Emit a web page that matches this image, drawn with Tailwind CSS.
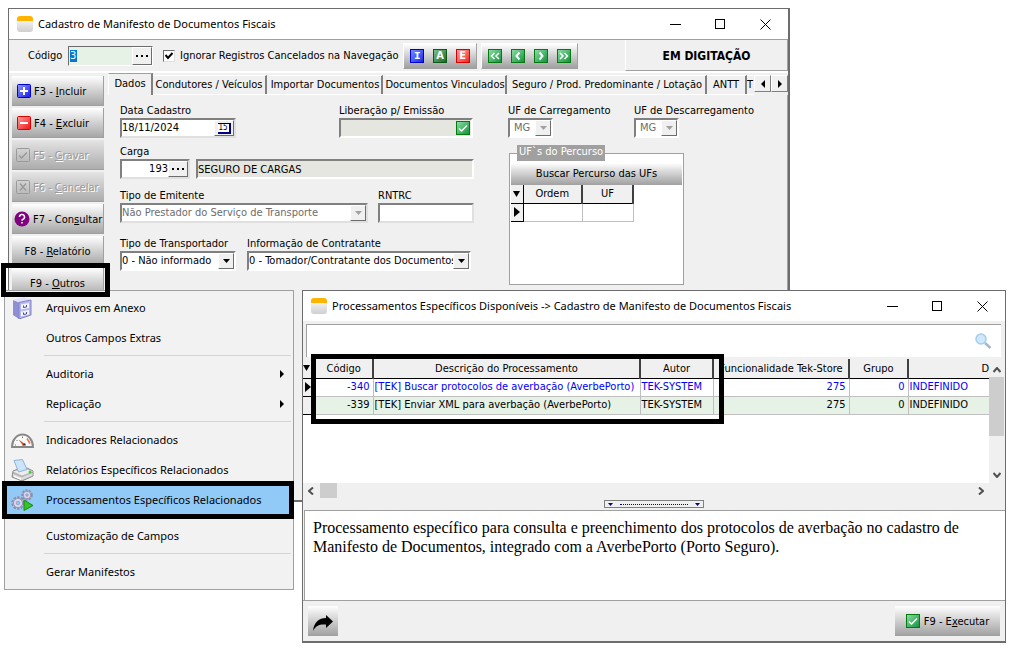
<!DOCTYPE html>
<html lang="pt-BR">
<head>
<meta charset="utf-8">
<title>Cadastro de Manifesto de Documentos Fiscais</title>
<script src="https://cdn.jsdelivr.net/npm/@tailwindcss/browser@4"></script>
</head>
<body class="relative min-h-screen overflow-hidden bg-white font-['DejaVu_Sans_Condensed','DejaVu_Sans',sans-serif] text-[11px] leading-[14px] text-black">

<!-- shared drawings -->
<svg class="absolute size-0" aria-hidden="true">
  <defs>
    <linearGradient id="green" x1="0" y1="0" x2="1" y2="1"><stop offset="0" stop-color="#8fe0a8"/><stop offset="1" stop-color="#0f9038"/></linearGradient>
    <linearGradient id="blue" x1="0" y1="0" x2="1" y2="1"><stop offset="0" stop-color="#8f9cff"/><stop offset="1" stop-color="#1717ee"/></linearGradient>
    <linearGradient id="red" x1="0" y1="0" x2="1" y2="1"><stop offset="0" stop-color="#ffa0a0"/><stop offset="1" stop-color="#f01212"/></linearGradient>
    <linearGradient id="pale" x1="0" y1="0" x2="0" y2="1"><stop offset="0" stop-color="#ffffff"/><stop offset="1" stop-color="#cfcfcf"/></linearGradient>
    <symbol id="app" viewBox="0 0 16 16"><rect width="16" height="16" rx="3" fill="url(#pale)"/><path d="M0 5V3a3 3 0 0 1 3-3h10a3 3 0 0 1 3 3v2z" fill="#ffb400"/></symbol>
    <symbol id="check" viewBox="0 0 14 14"><rect x=".5" y=".5" width="13" height="13" fill="url(#green)" stroke="#067a10"/><path d="M3 7.500 5.500 10 11 4.500" fill="none" stroke="#fff" stroke-width="1.500"/></symbol>
    <symbol id="min" viewBox="0 0 11 11"><path d="M0 5.500h11" stroke="#000"/></symbol>
    <symbol id="max" viewBox="0 0 11 11"><rect x=".5" y=".5" width="9" height="9" fill="none" stroke="#000"/></symbol>
    <symbol id="close" viewBox="0 0 11 11"><path d="m.5.5 10 10m0-10-10 10" stroke="#000" fill="none"/></symbol>
    <symbol id="down" viewBox="0 0 7 4"><path d="M0 0h7L3.500 4z" fill="currentColor"/></symbol>
    <symbol id="right" viewBox="0 0 4 8"><path d="M0 0v8l4-4z" fill="currentColor"/></symbol>
  </defs>
</svg>

<!-- main window -->
<section class="absolute left-2 right-[222px] top-2 flex min-h-[494px] flex-col border border-b-2 border-r-2 border-[#6d6d6d] bg-[#f0f0f0]">
  <header class="flex h-[30px] items-center bg-white pl-2 pr-[17px]">
    <svg class="size-4"><use href="#app"/></svg>
    <h1 class="ml-[5px] flex-1 font-['Noto_Sans',sans-serif] text-[11px]">Cadastro de Manifesto de Documentos Fiscais</h1>
    <div class="flex gap-[34px]">
      <button aria-label="Minimizar"><svg class="size-[11px]"><use href="#min"/></svg></button>
      <button aria-label="Maximizar"><svg class="size-[11px]"><use href="#max"/></svg></button>
      <button aria-label="Fechar"><svg class="size-[11px]"><use href="#close"/></svg></button>
    </div>
  </header>

  <div class="flex h-[34px] items-center border-b-2 border-t border-b-white border-t-[#a0a0a0] pl-[19px]">
    <label for="codigo" class="w-[40px]">Código</label>
    <div class="flex h-5 w-[85px] border border-b-white border-l-[#6d6d6d] border-r-white border-t-[#6d6d6d] bg-[#e6f2e6]">
      <div class="flex min-w-0 flex-1 items-center pl-[1px]"><input id="codigo" value="3" class="h-3 w-[7px] bg-[#0078d7] text-white outline-none"></div>
      <button aria-label="Procurar código" class="flex w-5 items-center justify-center border border-b-[#6d6d6d] border-l-white border-r-[#6d6d6d] border-t-white bg-[#f0f0f0]"><svg class="h-[2px] w-3" viewBox="0 0 12 2"><path d="M0 0h2v2H0zM5 0h2v2H5zM10 0h2v2h-2z"/></svg></button>
    </div>
    <label class="ml-[10px] flex items-center gap-[5px] whitespace-nowrap">
      <input type="checkbox" checked class="peer sr-only">
      <span class="flex size-3 items-center justify-center border border-b-[#e0e0e0] border-l-[#6d6d6d] border-r-[#e0e0e0] border-t-[#6d6d6d] bg-white"><svg class="size-2" viewBox="0 0 8 8"><path d="M.5 3 3 6l4.500-5" fill="none" stroke="#000" stroke-width="2"/></svg></span>
      Ignorar Registros Cancelados na Navegação
    </label>
    <div class="ml-auto flex h-full items-center">
      <div class="flex h-[26px] w-[74px] items-center justify-around border border-b-[#a0a0a0] border-l-white border-r-[#a0a0a0] border-t-white bg-linear-to-b from-white to-[#a0a0a0] px-[2px] text-[11px] font-bold leading-3 text-white">
        <button class="size-[14px] border border-[#0000c8] bg-linear-to-br from-[#7d86ff] to-[#1a1af0] font-['Liberation_Mono',monospace]">I</button>
        <button class="size-[14px] border border-[#0c5a18] bg-linear-to-br from-[#7fc08a] to-[#146a24]">A</button>
        <button class="size-[14px] border border-[#d80000] bg-linear-to-br from-[#ff9a9a] to-[#f41414]">E</button>
      </div>
      <div class="ml-1 flex h-[26px] w-[97px] items-center justify-around border border-b-[#a0a0a0] border-l-white border-r-[#a0a0a0] border-t-white bg-linear-to-b from-white to-[#a0a0a0] px-[2px]">
        <button aria-label="Primeiro"><svg class="size-[14px]" viewBox="0 0 14 14"><rect x=".5" y=".5" width="13" height="13" fill="url(#green)" stroke="#067a10"/><path d="M6.500 4 3.500 7l3 3m4.500-6L8 7l3 3" fill="none" stroke="#fff" stroke-width="1.500"/></svg></button>
        <button aria-label="Anterior"><svg class="size-[14px]" viewBox="0 0 14 14"><rect x=".5" y=".5" width="13" height="13" fill="url(#green)" stroke="#067a10"/><path d="M8.500 3.500 5.500 7l3 3.500" fill="none" stroke="#fff" stroke-width="2"/></svg></button>
        <button aria-label="Próximo"><svg class="size-[14px]" viewBox="0 0 14 14"><rect x=".5" y=".5" width="13" height="13" fill="url(#green)" stroke="#067a10"/><path d="m5.500 3.500 3 3.500-3 3.500" fill="none" stroke="#fff" stroke-width="2"/></svg></button>
        <button aria-label="Último"><svg class="size-[14px]" viewBox="0 0 14 14"><rect x=".5" y=".5" width="13" height="13" fill="url(#green)" stroke="#067a10"/><path d="m3 4 3 3-3 3m4.500-6 3 3-3 3" fill="none" stroke="#fff" stroke-width="1.500"/></svg></button>
      </div>
      <div class="ml-[47px] flex h-full w-[163px] items-center justify-center border-b border-l border-r border-b-[#a0a0a0] border-l-white border-r-[#a0a0a0] pt-[2px] text-[12px] font-bold">EM DIGITAÇÃO</div>
    </div>
  </div>

  <div class="flex flex-1">
    <nav class="flex w-[95px] shrink-0 flex-col gap-[2px] pl-[3px] pt-[3px]">
      <button class="flex h-[30px] items-center gap-[3px] border-b border-r border-[#a0a0a0] bg-linear-to-b from-white to-[#a6a6a6] pl-[5px]"><svg class="size-[14px]" viewBox="0 0 14 14"><rect x=".5" y=".5" width="13" height="13" rx="1" fill="url(#blue)" stroke="#0000c8"/><path d="M7 3v8M3 7h8" stroke="#fff" stroke-width="2"/></svg><span class="pt-[2px]">F3 - <u>I</u>ncluir</span></button>
      <button class="flex h-[30px] items-center gap-[3px] border-b border-r border-[#a0a0a0] bg-linear-to-b from-white to-[#a6a6a6] pl-[5px]"><svg class="size-[14px]" viewBox="0 0 14 14"><rect x=".5" y=".5" width="13" height="13" rx="1" fill="url(#red)" stroke="#d80000"/><path d="M3 7h8" stroke="#fff" stroke-width="2"/></svg><span class="pt-[2px]">F4 - <u>E</u>xcluir</span></button>
      <button disabled class="flex h-[30px] items-center gap-[3px] border-b border-[#a0a0a0] bg-linear-to-b from-[#e4e4e4] to-[#acacac] pl-1 text-[#9a9a9a] [text-shadow:1px_1px_0_#fff]"><svg class="size-[14px]" viewBox="0 0 14 14"><rect x=".5" y=".5" width="13" height="13" rx="1" fill="none" stroke="#9a9a9a"/><path d="M3 7.500 5.500 10 11 4.500" fill="none" stroke="#9a9a9a" stroke-width="1.500"/></svg><span class="pt-[2px]">F5 - <u>G</u>ravar</span></button>
      <button disabled class="flex h-[30px] items-center gap-[3px] border-b border-[#a0a0a0] bg-linear-to-b from-[#e4e4e4] to-[#acacac] pl-1 text-[#9a9a9a] [text-shadow:1px_1px_0_#fff]"><svg class="size-[14px]" viewBox="0 0 14 14"><rect x=".5" y=".5" width="13" height="13" rx="1" fill="none" stroke="#9a9a9a"/><path d="m4 3.500 6 7m0-7-6 7" fill="none" stroke="#9a9a9a" stroke-width="1.500"/></svg><span class="pt-[2px]">F6 - <u>C</u>ancelar</span></button>
      <button class="flex h-[30px] items-center gap-[3px] border-b border-r border-[#a0a0a0] bg-linear-to-b from-white to-[#a6a6a6] pl-[2px]"><svg class="size-4 shrink-0" viewBox="0 0 16 16"><circle cx="8" cy="8" r="7.500" fill="#800080"/><path d="M5.500 6a2.500 2.500 0 1 1 3.500 2.200q-1 .4-1 1.600" fill="none" stroke="#fff" stroke-width="1.500"/><path d="M7.200 11h1.600v1.600H7.200z" fill="#fff"/></svg><span class="whitespace-nowrap pt-[2px]">F7 - Con<u>s</u>ultar</span></button>
      <button class="h-[30px] border-b border-r border-[#a0a0a0] bg-linear-to-b from-white to-[#a6a6a6] pt-[2px]">F8 - <u>R</u>elatório</button>
      <button class="h-[30px] border-b border-r border-[#a0a0a0] bg-linear-to-b from-white to-[#a6a6a6] pt-[2px]">F9 - <u>O</u>utros</button>
    </nav>

    <div class="flex min-w-0 flex-1 flex-col pl-1">
      <div role="tablist" class="flex h-[22px] items-end overflow-hidden whitespace-nowrap">
        <button role="tab" aria-selected="true" class="h-[22px] w-[45px] border-l border-r-2 border-t border-l-white border-r-[#808080] border-t-[#a0a0a0] pb-[2px]">Dados</button>
        <div class="flex flex-1 items-end overflow-hidden border-b border-white">
          <button role="tab" class="h-[19px] w-[114px] shrink-0 border-r-2 border-t border-r-[#808080] border-t-white">Condutores / Veículos</button>
          <button role="tab" class="ml-[2px] h-[19px] w-[114px] shrink-0 border-r-2 border-t border-r-[#808080] border-t-white">Importar Documentos</button>
          <button role="tab" class="ml-[2px] h-[19px] w-[122px] shrink-0 border-r-2 border-t border-r-[#808080] border-t-white">Documentos Vinculados</button>
          <button role="tab" class="ml-[2px] h-[19px] w-[198px] shrink-0 border-r-2 border-t border-r-[#808080] border-t-white">Seguro / Prod. Predominante / Lotação</button>
          <button role="tab" class="h-[19px] w-[40px] shrink-0 border-r-2 border-t border-r-[#808080] border-t-white">ANTT</button>
          <button role="tab" class="h-[19px] shrink-0 border-t border-white">T</button>
        </div>
        <button aria-label="Abas anteriores" class="mb-[3px] flex h-[17px] w-[17px] items-center justify-center border border-b-[#808080] border-l-white border-r-[#808080] border-t-white"><svg class="h-2 w-1 rotate-180"><use href="#right"/></svg></button>
        <button aria-label="Próximas abas" class="mb-[3px] flex h-[17px] w-[17px] items-center justify-center border border-b-[#808080] border-l-white border-r-[#808080] border-t-white"><svg class="h-2 w-1"><use href="#right"/></svg></button>
      </div>

      <div class="flex flex-1 border-r border-[#a0a0a0] pl-3 pt-[9px]">
        <form class="w-[354px] shrink-0">
          <div class="flex justify-between">
            <div>
              <label for="data" class="block">Data Cadastro</label>
              <div class="flex h-5 w-[116px] border-2 border-b-[#e0e0e0] border-l-[#808080] border-r-[#e0e0e0] border-t-[#808080] bg-white">
                <input id="data" value="18/11/2024" class="min-w-0 flex-1 outline-none">
                <button type="button" aria-label="Calendário" class="flex w-5 items-center justify-center border border-b-[#6d6d6d] border-l-white border-r-[#6d6d6d] border-t-white bg-[#f0f0f0]"><span class="flex h-[11px] w-[13px] justify-center border-b-2 border-r-2 border-t border-b-[#000080] border-r-[#000080] border-t-black bg-white text-[8px] leading-2">15</span></button>
              </div>
            </div>
            <div class="w-[135px]">
              <label for="liberacao" class="block">Liberação p/ Emissão</label>
              <div class="flex h-5 w-[134px] border-2 border-b-white border-l-[#808080] border-r-white border-t-[#808080] bg-[#e6e6e1]">
                <input id="liberacao" class="min-w-0 flex-1 outline-none">
                <button type="button" aria-label="Confirmar liberação" class="flex w-4 items-center justify-center"><svg class="size-[14px]"><use href="#check"/></svg></button>
              </div>
            </div>
          </div>
          <label for="carga" class="mt-[7px] block">Carga</label>
          <div class="flex gap-[6px]">
            <div class="flex h-5 w-[70px] border-2 border-b-[#e0e0e0] border-l-[#808080] border-r-[#e0e0e0] border-t-[#808080] bg-white">
              <input id="carga" value="193" class="min-w-0 flex-1 text-right outline-none">
              <button type="button" aria-label="Procurar carga" class="flex w-5 items-center justify-center border border-b-[#6d6d6d] border-l-white border-r-[#6d6d6d] border-t-white bg-[#f0f0f0]"><svg class="h-[2px] w-3" viewBox="0 0 12 2"><path d="M0 0h2v2H0zM5 0h2v2H5zM10 0h2v2h-2z"/></svg></button>
            </div>
            <input aria-label="Descrição da carga" readonly value="SEGURO DE CARGAS" class="h-5 min-w-0 flex-1 border-2 border-b-white border-l-[#808080] border-r-white border-t-[#808080] bg-[#e6e6e1] outline-none">
          </div>
          <div class="mt-[10px] flex justify-between">
            <div>
              <label for="emitente" class="block">Tipo de Emitente</label>
              <div class="flex h-5 w-[248px] border-2 border-b-[#e0e0e0] border-l-[#808080] border-r-[#e0e0e0] border-t-[#808080] bg-white text-[#6d6d6d]">
                <select id="emitente" disabled class="min-w-0 flex-1 appearance-none"><option>Não Prestador do Serviço de Transporte</option></select>
                <span class="pointer-events-none flex w-4 items-center justify-center border border-b-[#6d6d6d] border-l-white border-r-[#6d6d6d] border-t-white bg-[#f0f0f0] text-[#a0a0a0]"><svg class="h-1 w-[7px]"><use href="#down"/></svg></span>
              </div>
            </div>
            <div class="w-[96px]">
              <label for="rntrc" class="block">RNTRC</label>
              <input id="rntrc" class="h-5 w-full border-2 border-b-[#e0e0e0] border-l-[#808080] border-r-[#e0e0e0] border-t-[#808080] bg-white outline-none">
            </div>
          </div>
          <div class="mt-[14px] flex gap-[11px]">
            <div class="w-[116px]">
              <label for="transportador" class="block whitespace-nowrap">Tipo de Transportador</label>
              <div class="flex h-5 border-2 border-b-white border-l-[#808080] border-r-white border-t-[#808080] bg-white">
                <select id="transportador" class="min-w-0 flex-1 appearance-none"><option>0 - Não informado</option></select>
                <span class="pointer-events-none flex w-4 items-center justify-center border border-b-[#6d6d6d] border-l-white border-r-[#6d6d6d] border-t-white bg-[#f0f0f0]"><svg class="h-1 w-[7px]"><use href="#down"/></svg></span>
              </div>
            </div>
            <div>
              <label for="contratante" class="block">Informação de Contratante</label>
              <div class="flex h-5 w-[224px] border-2 border-b-white border-l-[#808080] border-r-white border-t-[#808080] bg-white">
                <select id="contratante" class="min-w-0 flex-1 appearance-none"><option>0 - Tomador/Contratante dos Documentos</option></select>
                <span class="pointer-events-none flex w-4 items-center justify-center border border-b-[#6d6d6d] border-l-white border-r-[#6d6d6d] border-t-white bg-[#f0f0f0]"><svg class="h-1 w-[7px]"><use href="#down"/></svg></span>
              </div>
            </div>
          </div>
        </form>

        <div class="ml-[34px]">
          <div class="flex">
            <div class="w-[126px]">
              <label for="ufcar" class="block">UF de Carregamento</label>
              <div class="flex h-5 w-[45px] border-2 border-b-white border-l-[#808080] border-r-white border-t-[#808080] bg-white text-[#6d6d6d]">
                <select id="ufcar" disabled class="min-w-0 flex-1 appearance-none pl-1"><option>MG</option></select>
                <span class="pointer-events-none flex w-4 items-center justify-center border border-b-[#6d6d6d] border-l-white border-r-[#6d6d6d] border-t-white bg-[#f0f0f0] text-[#a0a0a0]"><svg class="h-1 w-[7px]"><use href="#down"/></svg></span>
              </div>
            </div>
            <div>
              <label for="ufdes" class="block whitespace-nowrap">UF de Descarregamento</label>
              <div class="flex h-5 w-[45px] border-2 border-b-white border-l-[#808080] border-r-white border-t-[#808080] bg-white text-[#6d6d6d]">
                <select id="ufdes" disabled class="min-w-0 flex-1 appearance-none pl-1"><option>MG</option></select>
                <span class="pointer-events-none flex w-4 items-center justify-center border border-b-[#6d6d6d] border-l-white border-r-[#6d6d6d] border-t-white bg-[#f0f0f0] text-[#a0a0a0]"><svg class="h-1 w-[7px]"><use href="#down"/></svg></span>
              </div>
            </div>
          </div>
          <fieldset class="ml-[1px] mt-[7px] h-[140px] w-[175px] border border-[#a0a0a0] bg-white px-[1px]">
            <legend class="ml-[6px] h-4 whitespace-nowrap bg-[#a0a0a0] px-[2px] text-white">UF`s do Percurso</legend>
            <button class="mt-[2px] block h-[22px] w-full bg-linear-to-b from-white to-[#a0a0a0]">Buscar Percurso das UFs</button>
            <table class="table-fixed border-collapse">
              <thead>
                <tr class="h-[18px] border-b border-black bg-[#f0f0f0]">
                  <th class="w-3 border-r border-black"><svg class="mx-auto h-[6px] w-[7px]" viewBox="0 0 7 6"><path d="M0 0h7L3.500 6z"/></svg></th>
                  <th class="w-[59px] border-r-2 border-[#404040] font-normal">Ordem</th>
                  <th class="w-[51px] border-r-2 border-[#404040] font-normal">UF</th>
                </tr>
              </thead>
              <tbody>
                <tr class="h-[18px] border-b border-[#c0c0c0]">
                  <td class="border-b border-r border-black bg-[#f0f0f0]"><svg class="mx-auto h-[10px] w-[6px]" viewBox="0 0 6 10"><path d="M0 0v10l6-5z"/></svg></td>
                  <td class="border-r border-[#c0c0c0]"></td>
                  <td class="border-r border-[#c0c0c0]"></td>
                </tr>
              </tbody>
            </table>
          </fieldset>
        </div>
      </div>
    </div>
  </div>
</section>

<!-- context menu opened from F9 -->
<ul role="menu" class="absolute left-1 top-[290px] w-[290px] border border-[#a0a0a0] bg-[#f2f2f2] pb-[2px] pt-[2px] font-['Noto_Sans',sans-serif] text-[11px]">
  <li><button role="menuitem" class="flex h-[30px] w-full items-center pl-[7px]"><svg class="mr-3 size-[22px]" viewBox="0 0 22 22"><path d="m1 3 6 2v17l-6-4z" fill="#8f8fd4"/><path d="M1 3 12 0l7 3L7 5.500z" fill="#e0e0fa"/><path d="M7 5.500 19 3v15L7 22z" fill="#b8b8ee" stroke="#8080c8"/><path d="m9 7.500 8-1.500v5L9 12.500zM9 14.500l8-1.500v4.500L9 19.500z" fill="#f4f4ff"/><path d="M11.500 8.500v2l3-.5V8M11.500 15.500v2l3-.5v-2" fill="none" stroke="#4c4c98"/></svg>Arquivos em Anexo</button></li>
  <li><button role="menuitem" class="flex h-[30px] w-full items-center pl-[41px]">Outros Campos Extras</button></li>
  <li role="separator" class="-mt-[3px] mb-[3px] ml-[39px] mr-[2px] h-[6px] border-b border-[#d4d4d4]"></li>
  <li><button role="menuitem" class="flex h-[30px] w-full items-center pl-[41px] pr-[9px]"><span class="flex-1 text-left">Auditoria</span><svg class="h-2 w-1"><use href="#right"/></svg></button></li>
  <li><button role="menuitem" class="flex h-[30px] w-full items-center pl-[41px] pr-[9px]"><span class="flex-1 text-left">Replicação</span><svg class="h-2 w-1"><use href="#right"/></svg></button></li>
  <li role="separator" class="-mt-[3px] mb-[3px] ml-[39px] mr-[2px] h-[6px] border-b border-[#d4d4d4]"></li>
  <li><button role="menuitem" class="flex h-[30px] w-full items-center pl-[6px]"><svg class="mr-3 h-[15px] w-[23px]" viewBox="0 0 23 15"><path d="M1 14a10.500 12.500 0 0 1 21 0z" fill="#fafafa" stroke="#888" stroke-width="2"/><path d="M4 12h1M5.500 7l1 1M11.500 3.500V5" stroke="#777"/><path d="m7.500 6.500 6.500 4.500-2 1.500z" fill="#e04818"/><path d="M11 12.500 14 10l1 2.500z" fill="#333"/><path d="m16 5.500 3 5" stroke="#f07050" stroke-width="1.500"/></svg>Indicadores Relacionados</button></li>
  <li><button role="menuitem" class="flex h-[30px] w-full items-center pl-[6px]"><svg class="mr-3 h-[22px] w-[23px]" viewBox="0 0 23 22"><path d="m2 12 5-2 9-1 6 3v5l-11 5-10-4z" fill="#b8b8b8" stroke="#8c8c8c"/><path d="m2 12.500 12-3 8 3-11 4z" fill="#ededed"/><path d="m3 1.500 8.500-1 4.500 10-8.500 2.500z" fill="#cbe4fb" stroke="#8fb4d8"/><path d="m2 15 9 3.500L21.500 14v2.500L11 21l-9-3.500z" fill="#dedede"/><path d="m3 16.500 7 3v1.500l-7-3z" fill="#fff"/><circle cx="19" cy="13" r="1.500" fill="#3fce3f"/></svg>Relatórios Específicos Relacionados</button></li>
  <li><button role="menuitem" class="flex h-[30px] w-full items-center bg-[#91c9f7] pl-[6px]"><svg class="mr-3 h-[22px] w-[23px]" viewBox="0 0 23 22"><circle cx="16" cy="6" r="4.500" fill="#c4c4dc" stroke="#8c8cae" stroke-width="2.500" stroke-dasharray="2 1.200"/><circle cx="16" cy="6" r="3.800" fill="#d8d8ec" stroke="#9494b4"/><circle cx="16" cy="6" r="1.300" fill="#91c9f7" stroke="#8484a8" stroke-width=".6"/><circle cx="7" cy="14" r="5.500" fill="#c4c4dc" stroke="#8c8cae" stroke-width="2.500" stroke-dasharray="2.200 1.300"/><circle cx="7" cy="14" r="4.600" fill="#d8d8ec" stroke="#9494b4"/><circle cx="7" cy="14" r="1.800" fill="#91c9f7" stroke="#8484a8" stroke-width=".6"/><path d="m13 11 9 5.500-9 5z" fill="#34c424" stroke="#168c16"/></svg>Processamentos Específicos Relacionados</button></li>
  <li role="separator" class="ml-[39px] mr-[2px] h-[6px]"></li>
  <li><button role="menuitem" class="flex h-[30px] w-full items-center pl-[41px]">Customização de Campos</button></li>
  <li role="separator" class="-mt-[3px] mb-[3px] ml-[39px] mr-[2px] h-[6px] border-b border-[#d4d4d4]"></li>
  <li><button role="menuitem" class="flex h-[30px] w-full items-center pl-[41px]">Gerar Manifestos</button></li>
</ul>

<!-- processing window -->
<section class="absolute left-[302px] right-[6px] top-[290px] flex flex-col border border-b-2 border-[#6d6d6d] bg-[#f0f0f0]">
  <header class="flex h-[30px] items-center bg-white pl-2 pr-[17px]">
    <svg class="size-4"><use href="#app"/></svg>
    <h2 class="ml-[5px] flex-1 font-['Noto_Sans',sans-serif] text-[11px]">Processamentos Específicos Disponíveis -&gt; Cadastro de Manifesto de Documentos Fiscais</h2>
    <div class="flex gap-[34px]">
      <button aria-label="Minimizar"><svg class="size-[11px]"><use href="#min"/></svg></button>
      <button aria-label="Maximizar"><svg class="size-[11px]"><use href="#max"/></svg></button>
      <button aria-label="Fechar"><svg class="size-[11px]"><use href="#close"/></svg></button>
    </div>
  </header>
  <div class="ml-[3px] mr-1 mt-[3px] flex h-[33px] items-center border-l border-t border-[#a0a0a0] bg-white pr-[9px]">
    <input aria-label="Pesquisar" class="h-full min-w-0 flex-1 px-1 outline-none">
    <button aria-label="Buscar"><svg class="size-[18px]" viewBox="0 0 18 18"><circle cx="7" cy="7" r="5" fill="#cfe8fb" stroke="#a4cdec" stroke-width="1.500"/><path d="m11 11 5.500 5" stroke="#a8b8c8" stroke-width="2.500"/></svg></button>
  </div>

  <div class="mt-[2px] flex h-[124px] pr-[1px]">
    <div class="min-w-0 flex-1 overflow-hidden bg-white">
      <table class="w-full table-fixed border-collapse whitespace-nowrap">
        <colgroup><col class="w-[12px]"><col class="w-[58px]"><col class="w-[267px]"><col class="w-[73px]"><col class="w-[136px]"><col class="w-[59px]"><col></colgroup>
        <thead>
          <tr class="h-[19px] border-b border-black bg-[#f0f0f0]">
            <th class="border-r border-black"><svg class="h-[6px] w-[7px]" viewBox="0 0 7 6"><path d="M0 0h7L3.500 6z"/></svg></th>
            <th class="border-r-2 border-[#404040] pt-[1px] font-normal">Código</th>
            <th class="border-r-2 border-[#404040] pt-[1px] font-normal">Descrição do Processamento</th>
            <th class="border-r-2 border-[#404040] pt-[1px] font-normal">Autor</th>
            <th class="border-r-2 border-[#404040] pt-[1px] font-normal">Funcionalidade Tek-Store</th>
            <th class="border-r-2 border-[#404040] pt-[1px] font-normal">Grupo</th>
            <th class="pt-[1px] text-right font-normal">D</th>
          </tr>
        </thead>
        <tbody>
          <tr class="h-[18px] border-b border-[#c0c0c0] text-[#0000ff]">
            <td class="border-b border-r border-black bg-[#f0f0f0] text-black"><svg class="ml-[2px] h-[10px] w-[6px]" viewBox="0 0 6 10"><path d="M0 0v10l6-5z"/></svg></td>
            <td class="border-r border-[#c0c0c0] pr-[3px] text-right">-340</td>
            <td class="border-r border-[#c0c0c0] pl-[1px]">[TEK] Buscar protocolos de averbação (AverbePorto)</td>
            <td class="border-r border-[#c0c0c0] pl-[1px]">TEK-SYSTEM</td>
            <td class="border-r border-[#c0c0c0] pr-[3px] text-right">275</td>
            <td class="border-r border-[#c0c0c0] pr-[3px] text-right">0</td>
            <td class="pl-[1px]">INDEFINIDO</td>
          </tr>
          <tr class="h-[18px] border-b border-[#c0c0c0] bg-[#e6f2e6]">
            <td class="border-b border-r border-black bg-[#f0f0f0]"></td>
            <td class="border-r border-[#c0c0c0] pr-[3px] text-right">-339</td>
            <td class="border-r border-[#c0c0c0] pl-[1px]">[TEK] Enviar XML para averbação (AverbePorto)</td>
            <td class="border-r border-[#c0c0c0] pl-[1px]">TEK-SYSTEM</td>
            <td class="border-r border-[#c0c0c0] pr-[3px] text-right">275</td>
            <td class="border-r border-[#c0c0c0] pr-[3px] text-right">0</td>
            <td class="pl-[1px]">INDEFINIDO</td>
          </tr>
        </tbody>
      </table>
    </div>
    <div class="flex w-[15px] flex-col items-center pb-[5px] pt-2">
      <svg class="h-[6px] w-2" viewBox="0 0 8 6"><path d="m.5 5 3.500-4 3.500 4" fill="none" stroke="#505050" stroke-width="2"/></svg>
      <span class="mt-1 h-[59px] w-full bg-[#cdcdcd]"></span>
      <svg class="mt-auto h-[6px] w-2" viewBox="0 0 8 6"><path d="m.5 1 3.500 4 3.500-4" fill="none" stroke="#505050" stroke-width="2"/></svg>
    </div>
  </div>
  <div class="flex h-[15px] items-center pl-[5px] pr-[21px]">
    <svg class="h-2 w-[6px]" viewBox="0 0 6 8"><path d="M5 .5 1 4l4 3.500" fill="none" stroke="#505050" stroke-width="2"/></svg>
    <span class="ml-[6px] h-full w-[17px] bg-[#cdcdcd]"></span>
    <svg class="ml-auto h-2 w-[6px]" viewBox="0 0 6 8"><path d="m1 .5 4 3.500-4 3.500" fill="none" stroke="#505050" stroke-width="2"/></svg>
  </div>
  <div class="flex h-3 items-center justify-center">
    <button aria-label="Recolher descrição" class="flex h-2 w-[100px] items-center justify-center gap-[7px] border border-[#808080] text-[#000080]"><svg class="h-[3px] w-[5px]"><use href="#down"/></svg><span class="w-[68px] border-t border-dotted border-[#000080]"></span><svg class="h-[3px] w-[5px]"><use href="#down"/></svg></button>
  </div>
  <div class="ml-[1px] h-[90px] border-l border-t border-[#a0a0a0] bg-white px-2 pt-[7px] font-['Liberation_Serif',serif] text-[16px] leading-[19px]">Processamento específico para consulta e preenchimento dos protocolos de averbação no cadastro de Manifesto de Documentos, integrado com a AverbePorto (Porto Seguro).</div>
  <footer class="flex h-[41px] items-center justify-between border-t border-[#a0a0a0] pl-[5px] pr-[5px]">
    <button aria-label="Compartilhar" class="flex size-[30px] items-center justify-center bg-linear-to-b from-white to-[#a0a0a0] pt-1"><svg class="h-4 w-5" viewBox="0 0 20 16"><path d="M0 16C1 7 6 3 13 3V0l7 6.500-7 6.500v-3.500C7 9 3 10 0 16z"/></svg></button>
    <button class="flex h-[30px] w-[105px] items-center justify-center gap-1 bg-linear-to-b from-white to-[#a0a0a0]"><svg class="size-[14px]"><use href="#check"/></svg><span class="pt-[2px]">F9 - E<u>x</u>ecutar</span></button>
  </footer>
</section>

<!-- highlight frames -->
<div class="pointer-events-none absolute left-[1px] top-[263px] h-[34px] w-[109px] border-[5px] border-black"></div>
<div class="pointer-events-none absolute left-[2px] top-[481px] h-[38px] w-[292px] border-[5px] border-black"></div>
<div class="pointer-events-none absolute left-[311px] top-[354px] h-[70px] w-[413px] border-[5px] border-black"></div>
</body>
</html>
